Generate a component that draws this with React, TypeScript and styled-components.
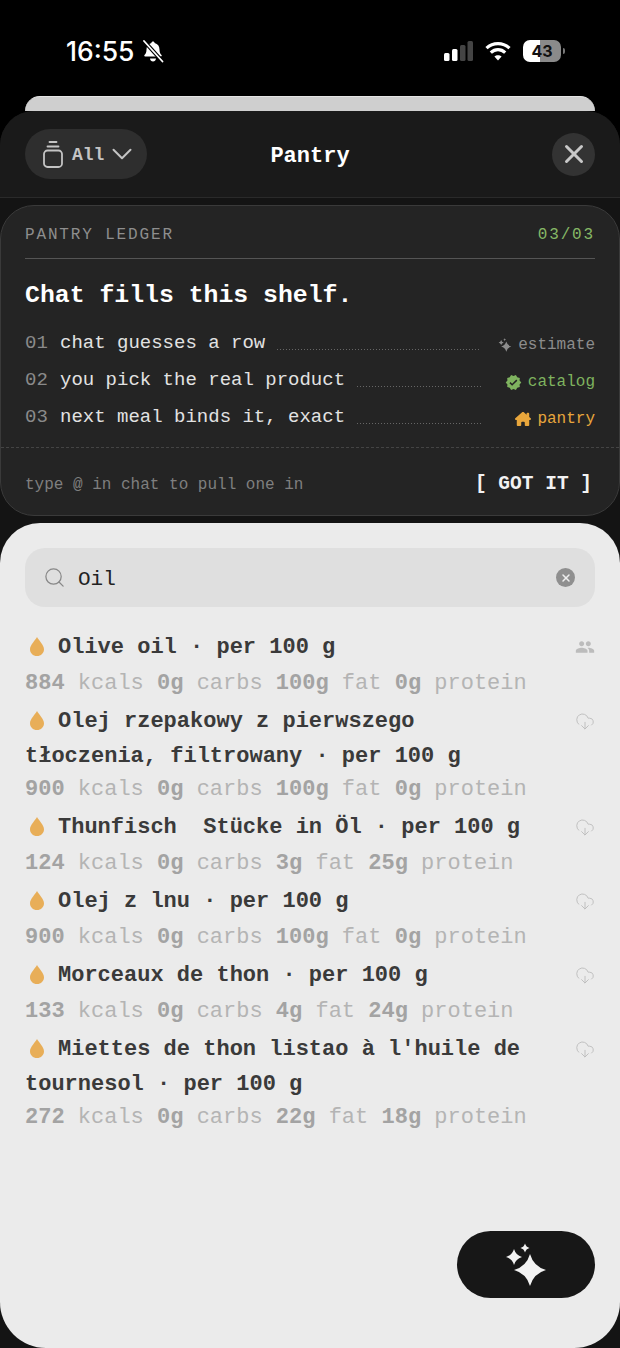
import * as React from 'react';
import styled, { createGlobalStyle } from 'styled-components';
import { ChevronDown, CloudDownload, Search, X } from 'lucide-react';
import { MdPeople, MdVerified } from 'react-icons/md';
import { FaHouseChimney } from 'react-icons/fa6';

const mono = '"Liberation Mono", "DejaVu Sans Mono", monospace';

const Global = createGlobalStyle`
  html, body { margin: 0; padding: 0; background: #000; }
  * { box-sizing: border-box; }
  #root { width: 620px; height: 1348px; overflow: hidden; }
`;

const Page = styled.div`
  width: 620px; height: 1348px;
  display: flex; flex-direction: column;
  background: #000; font-family: ${mono};
`;

const StatusBar = styled.div`
  height: 96px; flex: none;
  display: flex; align-items: center; justify-content: space-between;
  padding: 6px 59px 0 66px; color: #fff;
`;
const StatusLeft = styled.div`
  display: flex; align-items: center; gap: 7px;
`;
const Clock = styled.span`
  font: 500 26.5px/1 Inter, "Liberation Sans", sans-serif;
`;
const StatusRight = styled.div`
  display: flex; align-items: center; gap: 12px;
`;
const Battery = styled.div`
  position: relative;
  width: 38px; height: 22px; border-radius: 7px;
  background: linear-gradient(90deg, #fff 0 45%, #8a8a8a 45% 100%);
  color: #111;
  font: 700 16px/22px Inter, "Liberation Sans", sans-serif;
  text-align: center;
  &::after {
    content: ''; position: absolute; right: -4px; top: 8px;
    width: 2px; height: 6px; border-radius: 0 2px 2px 0; background: #777;
  }
`;

const PeekCard = styled.div`
  height: 15px; flex: none; margin: 0 25px;
  background: #cfcfcf; border-top: 1px solid #e4e4e4;
  border-radius: 22px 22px 0 0;
`;

const Sheet = styled.div`
  flex: 1; min-height: 0;
  display: flex; flex-direction: column;
  background: #141414;
  border-radius: 34px 34px 0 0;
`;
const SheetHeader = styled.header`
  height: 87px; flex: none;
  display: flex; align-items: center; justify-content: space-between;
  padding: 0 25px 0 25px; background: #1a1a1a;
  border-bottom: 1px solid #2a2a2a;
  border-radius: 34px 34px 0 0;
  position: relative;
`;
const FilterPill = styled.button`
  width: 122px; height: 50px; margin-bottom: 1px;
  display: flex; align-items: center; padding: 2px 0 0 18px; gap: 9px;
  background: #2e2e2e; border: none; border-radius: 25px;
  color: #c4c4c4; font: 700 18px/1 ${mono};
  svg:last-child { margin-left: -8.5px; margin-top: -2px; }
`;
const SheetTitle = styled.h1`
  position: absolute; left: 0; right: 0; top: 32px; margin: 0;
  text-align: center; color: #fff;
  font: 700 22px/28px ${mono};
`;
const CloseButton = styled.button`
  width: 43px; height: 43px; padding: 0;
  display: flex; align-items: center; justify-content: center;
  background: #333; border: none; border-radius: 50%; color: #c8c8c8;
`;

const Ledger = styled.section`
  height: 311px; flex: none; margin-top: 7px;
  display: flex; flex-direction: column;
  background: #242424; border: 1px solid #3a3a3a; border-radius: 34px;
`;
const LedgerTop = styled.div`
  height: 53px; flex: none; margin: 0 24px;
  display: flex; align-items: center; justify-content: space-between;
  padding-top: 6px;
  border-bottom: 1.5px solid #555;
  font-size: 16px; letter-spacing: 1.85px; color: #8e8e8e;
`;
const Counter = styled.span`
  color: #86b866;
`;
const LedgerHeading = styled.h2`
  margin: 20px 24px 19px; color: #fff;
  font: 700 24.8px/32px ${mono};
`;
const LedgerRows = styled.div`
  margin: 0 24px; display: flex; flex-direction: column; gap: 11px;
`;
const LedgerRow = styled.div`
  height: 26px;
  display: flex; align-items: center;
  font-size: 19px; line-height: 26px; color: #e2e2e2;
`;
const RowNumber = styled.span`
  width: 35px; flex: none; color: #8a8a8a;
`;
const Leader = styled.span`
  flex: 1; margin: 12px 0 0 12px; min-width: 0; height: 1px;
  background: linear-gradient(90deg, #666 1px, transparent 1px) 0 0 / 3px 1px repeat-x;
`;
const Tag = styled.span<{ $color: string }>`
  width: 114px; flex: none; margin-top: 4px;
  display: flex; align-items: center; justify-content: flex-end; gap: 6px;
  font-size: 16px; color: ${(p) => p.$color};
`;
const LedgerFoot = styled.div`
  margin-top: auto; height: 68px; flex: none;
  display: flex; align-items: center; justify-content: space-between;
  padding: 6px 27px 0 24px;
  border-top: 1px dashed #444;
  font-size: 16px; color: #7f7f7f;
`;
const GotIt = styled.button`
  padding: 0; background: none; border: none; color: #f2f2f2;
  font: 700 19.5px/1 ${mono};
`;

const Lower = styled.section`
  position: relative;
  flex: 1; min-height: 0; margin-top: 7px; padding: 25px 25px 0;
  background: #ebebeb;
  border-radius: 40px 40px 46px 46px;
`;
const SearchField = styled.div`
  height: 59px;
  display: flex; align-items: center; gap: 12px;
  padding: 0 20px 0 18px;
  background: #dfdfdf; border-radius: 20px;
  color: #222; font-size: 21px;
`;
const SearchValue = styled.span`
  flex: 1; padding-top: 3px;
`;
const ClearButton = styled.span`
  width: 19px; height: 19px; border-radius: 50%;
  display: flex; align-items: center; justify-content: center;
  background: #8f8f8f; color: #eee;
`;
const List = styled.ul`
  list-style: none; margin: 20px 0 0; padding: 0;
  display: flex; flex-direction: column; gap: 2px;
`;
const Item = styled.li`
  display: grid; grid-template-columns: 1fr 20px; column-gap: 25px;
`;
const ItemTitle = styled.div`
  color: #3a3a3a; font: 700 22px/32px ${mono};
`;
const DropSlot = styled.span`
  display: inline-flex; align-items: center;
  height: 40px; width: 33px; padding: 0 0 2px 5px;
  vertical-align: middle;
`;
const Macros = styled.div`
  grid-column: 1 / -1; white-space: nowrap; padding-top: 1px;
  height: 32px;
  color: #b4b4b4; font: 400 22px/32px ${mono};
  b { color: #a3a3a3; font-weight: 700; }
`;
const ItemAction = styled.span`
  height: 40px; display: flex; align-items: center; justify-content: center;
  color: #bcbcbc;
`;
const AskButton = styled.button`
  position: absolute; right: 25px; bottom: 50px;
  width: 138px; height: 67px; padding: 0;
  display: flex; align-items: center; justify-content: center;
  background: #171717; border: none; border-radius: 34px;
`;

function star(cx: number, cy: number, r: number) {
  const k = r * 0.22;
  return `M${cx} ${cy - r}Q${cx + k} ${cy - k} ${cx + r} ${cy}Q${cx + k} ${cy + k} ${cx} ${cy + r}Q${cx - k} ${cy + k} ${cx - r} ${cy}Q${cx - k} ${cy - k} ${cx} ${cy - r}Z`;
}

function Sparkles({ size, color }: { size: number; color: string }) {
  return (
    <svg width={size} height={size} viewBox="0 0 44 44" fill={color}>
      <path d={star(26, 27, 16)} />
      <path d={star(10, 14, 8)} />
      <path d={star(21, 5, 4.5)} />
    </svg>
  );
}

function Drop() {
  return (
    <svg width="14" height="19" viewBox="0 0 14 19" fill="#e8ae58">
      <path d="M7 0C8.5 3 14 8 14 12.2C14 16 11 19 7 19C3 19 0 16 0 12.2C0 8 5.5 3 7 0Z" />
    </svg>
  );
}

function BellSlash() {
  return (
    <svg width="22" height="23" viewBox="0 0 22 23" fill="#fff">
      <path d="M11 1.5c.9 0 1.5.6 1.6 1.4 3.2.7 4.9 3.4 4.9 6.6 0 2.5.6 4.1 2 5.6.5.6.2 1.4-.6 1.4H3.1c-.8 0-1.1-.8-.6-1.4 1.4-1.5 2-3.1 2-5.6 0-3.2 1.7-5.9 4.9-6.6.1-.8.7-1.4 1.6-1.4Z" />
      <path d="M8 18.5h6c-.2 1.7-1.4 3-3 3s-2.8-1.3-3-3Z" />
      <path d="M2 1 20.5 21.5" stroke="#000" strokeWidth="4" />
      <path d="M2 1 20.5 21.5" stroke="#fff" strokeWidth="1.8" strokeLinecap="round" />
    </svg>
  );
}

function SignalBars() {
  return (
    <svg width="29" height="20" viewBox="0 0 29 20">
      <rect x="0" y="12" width="5.5" height="8" rx="1.5" fill="#fff" />
      <rect x="8" y="8" width="5.5" height="12" rx="1.5" fill="#fff" />
      <rect x="16" y="4" width="5.5" height="16" rx="1.5" fill="#444" />
      <rect x="23.5" y="0" width="5.5" height="20" rx="1.5" fill="#444" />
    </svg>
  );
}

function Wifi() {
  return (
    <svg width="26" height="20" viewBox="0 0 26 20" fill="none" stroke="#fff" strokeWidth="3.2">
      <path d="M1.5 7.2C8 1 18 1 24.5 7.2" />
      <path d="M5.8 11.6C10 7.6 16 7.6 20.2 11.6" />
      <path d="M13 19.5 9.4 15.6C11.4 13.8 14.6 13.8 16.6 15.6Z" fill="#fff" stroke="none" />
    </svg>
  );
}

function Jar() {
  return (
    <svg width="20" height="27" viewBox="0 0 20 27" fill="none" stroke="#c4c4c4" strokeWidth="1.8" strokeLinecap="round">
      <path d="M6.5 1h7" />
      <path d="M4.5 5.5h11" />
      <rect x="1" y="9.5" width="18" height="16.5" rx="3.5" />
    </svg>
  );
}

type Food = { name: React.ReactNode; source: 'shared' | 'cloud'; macros: [string, string, string, string] };

const foods: Food[] = [
  { name: 'Olive oil · per 100 g', source: 'shared', macros: ['884', '0g', '100g', '0g'] },
  { name: 'Olej rzepakowy z pierwszego tłoczenia, filtrowany · per 100 g', source: 'cloud', macros: ['900', '0g', '100g', '0g'] },
  { name: 'Thunfisch\u00a0 Stücke in Öl · per 100 g', source: 'cloud', macros: ['124', '0g', '3g', '25g'] },
  { name: 'Olej z lnu · per 100 g', source: 'cloud', macros: ['900', '0g', '100g', '0g'] },
  { name: 'Morceaux de thon · per 100 g', source: 'cloud', macros: ['133', '0g', '4g', '24g'] },
  { name: "Miettes de thon listao à l'huile de tournesol · per 100 g", source: 'cloud', macros: ['272', '0g', '22g', '18g'] },
];

export default function App() {
  return (
    <Page>
      <Global />
      <StatusBar>
        <StatusLeft>
          <Clock>16:55</Clock>
          <BellSlash />
        </StatusLeft>
        <StatusRight>
          <SignalBars />
          <Wifi />
          <Battery>43</Battery>
        </StatusRight>
      </StatusBar>
      <PeekCard />
      <Sheet>
        <SheetHeader>
          <FilterPill>
            <Jar />
            All
            <ChevronDown size={34} strokeWidth={1.4} />
          </FilterPill>
          <SheetTitle>Pantry</SheetTitle>
          <CloseButton>
            <X size={30} strokeWidth={2.4} />
          </CloseButton>
        </SheetHeader>
        <Ledger>
          <LedgerTop>
            <span>PANTRY LEDGER</span>
            <Counter>03/03</Counter>
          </LedgerTop>
          <LedgerHeading>Chat fills this shelf.</LedgerHeading>
          <LedgerRows>
            <LedgerRow>
              <RowNumber>01</RowNumber>
              chat guesses a row
              <Leader />
              <Tag $color="#8c8c8c">
                <Sparkles size={14} color="#8c8c8c" />
                estimate
              </Tag>
            </LedgerRow>
            <LedgerRow>
              <RowNumber>02</RowNumber>
              you pick the real product
              <Leader />
              <Tag $color="#7fb35f">
                <MdVerified size={17} />
                catalog
              </Tag>
            </LedgerRow>
            <LedgerRow>
              <RowNumber>03</RowNumber>
              next meal binds it, exact
              <Leader />
              <Tag $color="#e8a63c">
                <FaHouseChimney size={16} />
                pantry
              </Tag>
            </LedgerRow>
          </LedgerRows>
          <LedgerFoot>
            <span>type @ in chat to pull one in</span>
            <GotIt>[ GOT IT ]</GotIt>
          </LedgerFoot>
        </Ledger>
        <Lower>
          <SearchField>
            <Search size={23} strokeWidth={1.3} color="#888" />
            <SearchValue>Oil</SearchValue>
            <ClearButton>
              <X size={12} strokeWidth={3} />
            </ClearButton>
          </SearchField>
          <List>
            {foods.map((food, i) => (
              <Item key={i}>
                <ItemTitle>
                  <DropSlot>
                    <Drop />
                  </DropSlot>
                  {food.name}
                </ItemTitle>
                <ItemAction>
                  {food.source === 'shared' ? <MdPeople size={24} /> : <CloudDownload size={23} strokeWidth={1.1} />}
                </ItemAction>
                <Macros>
                  <b>{food.macros[0]}</b> kcals <b>{food.macros[1]}</b> carbs <b>{food.macros[2]}</b> fat <b>{food.macros[3]}</b> protein
                </Macros>
              </Item>
            ))}
          </List>
          <AskButton>
            <Sparkles size={44} color="#f2f2f2" />
          </AskButton>
        </Lower>
      </Sheet>
    </Page>
  );
}
